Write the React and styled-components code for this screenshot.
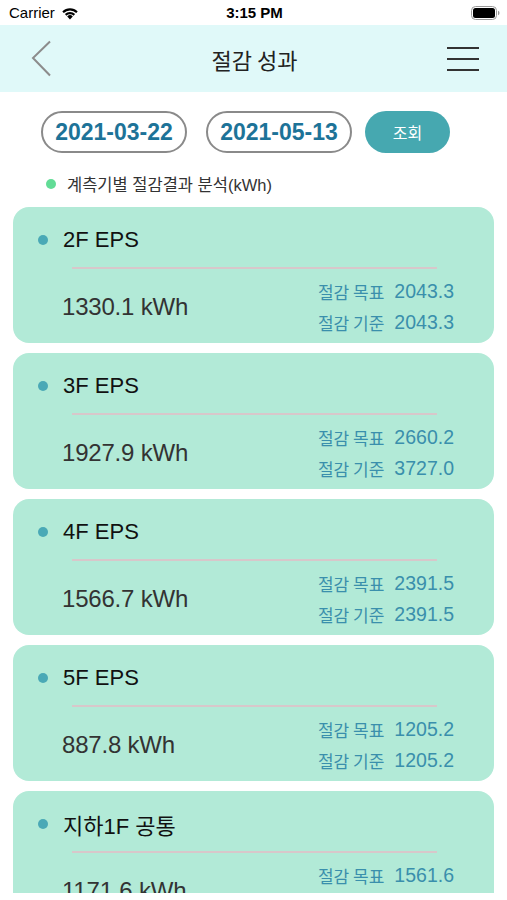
import React from "react";
import styled, { createGlobalStyle } from "styled-components";

const Global = createGlobalStyle`
  html, body { margin: 0; padding: 0; background: #fff; }
  body { font-family: "Liberation Sans", "Noto Sans CJK KR", sans-serif; }
  * { box-sizing: border-box; }
`;

const Screen = styled.div`
  width: 507px;
  height: 900px;
  display: flex;
  flex-direction: column;
  background: #fff;
  overflow: hidden;
`;

const StatusBar = styled.div`
  height: 25px;
  display: grid;
  grid-template-columns: 1fr auto 1fr;
  align-items: center;
  padding: 0 7px 0 9px;
  font-size: 15px;
  color: #000;
`;

const Carrier = styled.div`
  display: flex;
  align-items: center;
  gap: 6px;
  font-weight: 500;
`;

const Clock = styled.div`
  font-weight: 700;
`;

const BatteryWrap = styled.div`
  justify-self: end;
  display: flex;
  align-items: center;
`;

const NavBar = styled.div`
  height: 67px;
  background: #e0f9f9;
  display: grid;
  grid-template-columns: 60px 1fr 60px;
  align-items: center;
  padding: 0 28px 0 30px;
`;

const NavTitle = styled.div`
  text-align: center;
  font-size: 22px;
  color: #222;
  font-family: "Noto Sans CJK KR", sans-serif;
`;

const IconBtn = styled.div`
  display: flex;
  justify-content: ${(p) => (p.$end ? "flex-end" : "flex-start")};
  align-items: center;
`;

const Scroll = styled.div`
  height: 801px;
  overflow: hidden;
  display: flex;
  flex-direction: column;
`;

const FilterRow = styled.div`
  display: flex;
  align-items: center;
  padding: 19px 0 0 41px;
`;

const DatePill = styled.div`
  width: 146px;
  height: 42px;
  border: 2px solid #8a8a8a;
  border-radius: 21px;
  display: flex;
  align-items: center;
  justify-content: center;
  font-size: 23px;
  font-weight: 700;
  color: #1d7398;
  margin-right: ${(p) => p.$gap}px;
`;

const SearchBtn = styled.div`
  width: 85px;
  height: 42px;
  border-radius: 21px;
  background: #46a8b0;
  color: #fff;
  display: flex;
  align-items: center;
  justify-content: center;
  font-size: 16px;
  font-family: "Noto Sans CJK KR", sans-serif;
`;

const Legend = styled.div`
  display: flex;
  align-items: center;
  gap: 11px;
  margin: 21px 0 0 46px;
  height: 20px;
  font-size: 16.5px;
  color: #333;
`;

const Dot = styled.span`
  width: ${(p) => p.$size}px;
  height: ${(p) => p.$size}px;
  border-radius: 50%;
  background: ${(p) => p.$color};
  flex: none;
`;

const List = styled.div`
  display: flex;
  flex-direction: column;
  gap: 10px;
  padding: 13px 13px 0;
`;

const Card = styled.div`
  flex: none;
  height: 136px;
  background: #b2ead7;
  border-radius: 16px;
  padding: 20px 40px 0 25px;
  display: flex;
  flex-direction: column;
`;

const CardHead = styled.div`
  height: 26px;
  display: flex;
  align-items: center;
  gap: 15px;
  font-size: 22px;
  color: #111;
`;

const Divider = styled.div`
  height: 2px;
  background: #d8c7ca;
  margin: 14px 17px 0 34px;
`;

const CardBody = styled.div`
  display: flex;
  justify-content: space-between;
  align-items: center;
  padding: 7px 0 0 24px;
`;

const Usage = styled.div`
  font-size: 24px;
  color: #333;
  letter-spacing: -0.2px;
`;

const Stats = styled.div`
  display: flex;
  flex-direction: column;
  align-items: flex-end;
`;

const StatRow = styled.div`
  height: 31px;
  display: flex;
  align-items: center;
  gap: 10px;
  color: #3a8fac;
`;

const StatLabel = styled.span`
  font-size: 17px;
  font-family: "Noto Sans CJK KR", sans-serif;
`;

const StatValue = styled.span`
  font-size: 19.5px;
`;

const Wifi = () => (
  <svg width="18" height="14" viewBox="0 0 18 14">
    <path d="M9 13.5 L6.2 10.4 A4 4 0 0 1 11.8 10.4 Z" fill="#000" />
    <path d="M3.9 8.1 A7.3 7.3 0 0 1 14.1 8.1 L12.6 9.7 A5.2 5.2 0 0 0 5.4 9.7 Z" fill="#000" />
    <path d="M1.3 5.4 A11 11 0 0 1 16.7 5.4 L15.2 7 A8.8 8.8 0 0 0 2.8 7 Z" fill="#000" />
  </svg>
);

const Battery = () => (
  <svg width="29" height="14" viewBox="0 0 29 14">
    <rect x="0.5" y="0.5" width="25" height="13" rx="4" fill="none" stroke="#999" />
    <rect x="2" y="2" width="22" height="10" rx="2.5" fill="#000" />
    <path d="M27 4.8 Q28.5 5 28.5 7 Q28.5 9 27 9.2 Z" fill="#999" />
  </svg>
);

const BackIcon = () => (
  <svg width="22" height="38" viewBox="0 0 22 38">
    <path d="M20 1.5 L3 18 L20 35.5" fill="none" stroke="#8c8c8c" strokeWidth="2" />
  </svg>
);

const MenuIcon = () => (
  <svg width="32" height="26" viewBox="0 0 32 26">
    <rect x="0" y="1" width="32" height="2" fill="#333" />
    <rect x="0" y="12" width="32" height="2" fill="#333" />
    <rect x="0" y="23" width="32" height="2" fill="#333" />
  </svg>
);

const meters = [
  { name: "2F EPS", usage: "1330.1", goal: "2043.3", base: "2043.3" },
  { name: "3F EPS", usage: "1927.9", goal: "2660.2", base: "3727.0" },
  { name: "4F EPS", usage: "1566.7", goal: "2391.5", base: "2391.5" },
  { name: "5F EPS", usage: "887.8", goal: "1205.2", base: "1205.2" },
  { name: "지하1F 공통", usage: "1171.6", goal: "1561.6", base: "1561.6" },
];

export default function App() {
  return (
    <>
      <Global />
      <Screen>
        <StatusBar>
          <Carrier>
            Carrier <Wifi />
          </Carrier>
          <Clock>3:15 PM</Clock>
          <BatteryWrap>
            <Battery />
          </BatteryWrap>
        </StatusBar>
        <NavBar>
          <IconBtn>
            <BackIcon />
          </IconBtn>
          <NavTitle>절감 성과</NavTitle>
          <IconBtn $end>
            <MenuIcon />
          </IconBtn>
        </NavBar>
        <Scroll>
          <FilterRow>
            <DatePill $gap={19}>2021-03-22</DatePill>
            <DatePill $gap={13}>2021-05-13</DatePill>
            <SearchBtn>조회</SearchBtn>
          </FilterRow>
          <Legend>
            <Dot $size={10} $color="#62dc96" />
            계측기별 절감결과 분석(kWh)
          </Legend>
          <List>
            {meters.map((m) => (
              <Card key={m.name}>
                <CardHead>
                  <Dot $size={10} $color="#4aa9b6" />
                  {m.name}
                </CardHead>
                <Divider />
                <CardBody>
                  <Usage>{m.usage} kWh</Usage>
                  <Stats>
                    <StatRow>
                      <StatLabel>절감 목표</StatLabel>
                      <StatValue>{m.goal}</StatValue>
                    </StatRow>
                    <StatRow>
                      <StatLabel>절감 기준</StatLabel>
                      <StatValue>{m.base}</StatValue>
                    </StatRow>
                  </Stats>
                </CardBody>
              </Card>
            ))}
          </List>
        </Scroll>
      </Screen>
    </>
  );
}
